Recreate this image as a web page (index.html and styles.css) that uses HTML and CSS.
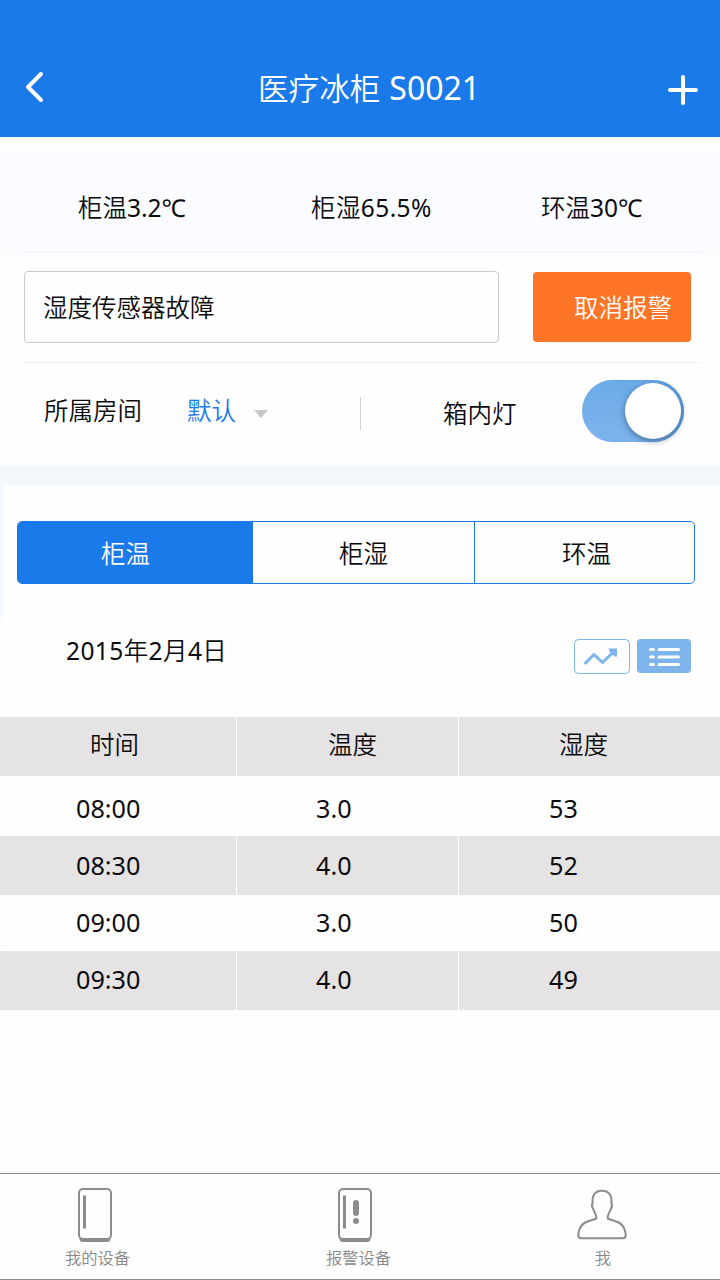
FILE: index.html
```html
<!DOCTYPE html>
<html lang="zh-CN">
<head>
<meta charset="utf-8">
<title>医疗冰柜 S0021</title>
<link rel="stylesheet" href="styles.css">
</head>
<body>
<div class="app">
  <header class="header">
    <svg class="back" width="22" height="34" viewBox="0 0 22 34"><path d="M17 4 4 17l13 13"/></svg>
    <h1 class="title">医疗冰柜 <span class="code num">S0021</span></h1>
    <svg class="add" width="32" height="32" viewBox="0 0 32 32"><path d="M16 3v26M3 16h26"/></svg>
  </header>

  <section class="stats">
    <span class="stat">柜温<span class="num">3.2℃</span></span>
    <span class="stat humidity">柜湿<span class="num">65.5%</span></span>
    <span class="stat">环温<span class="num">30℃</span></span>
  </section>

  <section class="alarm">
    <div class="alarm-text">湿度传感器故障</div>
    <button class="cancel">取消报警</button>
  </section>

  <section class="settings">
    <span class="room-label">所属房间</span>
    <span class="room">默认</span>
    <i class="caret"></i>
    <i class="divider"></i>
    <span class="lamp-label">箱内灯</span>
    <div class="switch"><i class="knob"></i></div>
  </section>

  <main class="records">
    <div class="panel">
      <nav class="tabs">
        <a class="tab active">柜温</a>
        <a class="tab">柜湿</a>
        <a class="tab">环温</a>
      </nav>
    </div>
    <div class="log">
      <div class="log-bar">
        <span class="date"><span class="num">2015</span>年<span class="num">2</span>月<span class="num">4</span>日</span>
        <svg class="view chart" width="56" height="35" viewBox="0 0 56 35">
          <rect class="frame" x=".5" y=".5" width="55" height="34" rx="4"/>
          <path class="trend" d="M11.500 24 20 15.500l8.500 8L40.500 12"/>
          <path class="tip" d="M34.500 9.500h8.500v8l-2.500 0-5-5z"/>
        </svg>
        <svg class="view list" width="54" height="34" viewBox="0 0 54 34">
          <rect class="fill" width="54" height="34" rx="4"/>
          <path class="lines" d="M13.500 10.500h3M22 10.500h19.500M13.500 18h3M22 18h19.500M13.500 25.500h3M22 25.500h19.500"/>
        </svg>
      </div>
      <div class="table">
        <div class="row head shaded"><span class="c1">时间</span><span class="c2">温度</span><span class="c3">湿度</span></div>
        <div class="row first"><span class="c1">08:00</span><span class="c2">3.0</span><span class="c3">53</span></div>
        <div class="row shaded second"><span class="c1">08:30</span><span class="c2">4.0</span><span class="c3">52</span></div>
        <div class="row third"><span class="c1">09:00</span><span class="c2">3.0</span><span class="c3">50</span></div>
        <div class="row shaded fourth"><span class="c1">09:30</span><span class="c2">4.0</span><span class="c3">49</span></div>
      </div>
    </div>
  </main>

  <footer class="tabbar">
    <a class="item mine">
      <svg width="36" height="56" viewBox="0 0 36 56"><rect x="2" y="2" width="32" height="50" rx="4"/><path d="M3.500 51.500c0 2 1 2.500 2.500 2.500h24c1.500 0 2.500-.5 2.500-2.500"/><path class="handle" d="M7.500 8.500v33"/></svg>
      <span>我的设备</span>
    </a>
    <a class="item alerts">
      <svg width="36" height="56" viewBox="0 0 36 56"><rect x="2" y="2" width="32" height="50" rx="4"/><path d="M3.500 51.500c0 2 1 2.500 2.500 2.500h24c1.500 0 2.500-.5 2.500-2.500"/><path class="handle" d="M7.500 8.500v33"/><path class="bang" d="M19 16v10"/><circle class="dot" cx="19" cy="34" r="3"/></svg>
      <span>报警设备</span>
    </a>
    <a class="item me">
      <svg class="person" width="50" height="56" viewBox="0 0 50 56"><path d="M19.300 31.500C19.800 28 17.500 26 16.500 22.500 15 20.500 14.600 18 15.600 16 14.800 8 18.500 3.800 25 3.800S35.200 8 34.400 16c1 2 .6 4.500-.9 6.500-1 3.500-3.300 5.500-2.800 9 2 1 6 2 10 3.500 6 2.500 8 9 8 13 0 2.200-1 3.300-3 3.300H4.300c-2 0-3-1.100-3-3.300 0-4 2-10.500 8-13 4-1.500 8-2.500 10-3.500z"/></svg>
      <span>我</span>
    </a>
  </footer>
</div>
</body>
</html>
```
FILE: styles.css
```css
* { box-sizing: border-box; }
body {
  margin: 0;
  font: 350 24.5px/30px "Noto Sans", "Noto Sans CJK SC DemiLight", "Noto Sans CJK SC", sans-serif;
  color: #0c0c0f;
  background: #fefefe;
}
svg { fill: none; display: block; flex: none; }
.num { font-weight: 400; }
.app { width: 720px; height: 1280px; display: flex; flex-direction: column; white-space: nowrap; overflow: hidden; }

.header { height: 137px; flex: none; background: #1b7aea; color: #fff; display: flex; padding: 70px 21px 0 24px; }
.back, .add { stroke: #fff; stroke-width: 4; stroke-linecap: round; stroke-linejoin: round; }
.title { margin: -2px 0 0 212px; width: 409px; font-size: 30.6px; line-height: 40px; font-weight: 350; }
.code { font-size: 32px; margin-left: 1px; }
.add { margin-top: 4px; }

.stats { height: 104px; flex: none; margin-top: 12px; background: #fafcff; display: flex; padding-top: 44px; position: relative; }
.stats::after { content: ""; position: absolute; left: 24px; right: 20px; bottom: 0; height: 1px; background: #edf0f4; }
.stat:nth-child(1) { margin-left: 78px; width: 233px; }
.stat:nth-child(2) { width: 230px; }
.humidity { letter-spacing: .4px; }

.alarm { flex: none; height: 110px; margin: 0 20px 0 24px; padding: 18px 9px 0 0; display: flex; justify-content: space-between; border-bottom: 1px solid #f0f1f3; }
.alarm-text { width: 475px; height: 72px; border: 1px solid #c9c9c9; border-radius: 4px; padding: 21px 0 0 18px; }
.cancel { margin-top: 1px; width: 158px; height: 70px; border: 0; border-radius: 4px; background: #ff7528; color: #fff; font: inherit; text-align: left; padding: 1px 0 0 41px; }

.settings { flex: none; height: 102px; display: flex; align-items: flex-start; }
.room-label { margin: 33px 0 0 44px; width: 143px; }
.room { margin-top: 33px; width: 67px; color: #1b7aea; }
.caret { margin-top: 47px; border: 7px solid transparent; border-top: 8px solid #c6c6c6; border-bottom: 0; }
.divider { width: 1px; height: 33px; margin: 34px 0 0 92px; background: #d2d2d2; }
.lamp-label { margin: 36px 0 0 82px; width: 139px; }
.switch { margin-top: 17px; width: 102px; height: 62px; border-radius: 31px; background: linear-gradient(#6caae8, #7db4ee); display: flex; padding: 3px; justify-content: flex-end; box-shadow: inset -2px 0 2px #5799d8; }
.knob { width: 56px; height: 56px; border-radius: 50%; background: #fff; box-shadow: 0 2px 6px rgba(20, 50, 90, .55); }

.records { flex: none; border-top: 20px solid #f3f8fc; }
.panel { height: 133px; border-left: 4px solid #f6f9fd; padding: 36px 25px 0 13px; }
.tabs { width: 678px; height: 63px; border: 1px solid #1b7aea; border-radius: 5px; display: flex; overflow: hidden; }
.tab { padding-top: 17px; }
.tab:nth-child(1) { width: 235px; padding-left: 83px; }
.tab:nth-child(2) { width: 221px; padding-left: 86px; }
.tab:nth-child(3) { width: 220px; padding-left: 87px; border-left: 1px solid #1b7aea; }
.tab.active { background: #1b7aea; color: #fff; }

.log { height: 458px; border-left: 1px solid #fafbfd; }
.log-bar { height: 99px; display: flex; padding: 18px 29px 0 65px; }
.date { width: 508px; letter-spacing: .4px; flex: none; }
.view { margin-top: 3px; }
.chart { margin-right: 7px; }
.frame, .trend { stroke: #7db4ec; }
.trend { stroke-width: 3; stroke-linecap: round; stroke-linejoin: round; }
.tip, .fill { fill: #7db4ec; }
.lines { stroke: #fff; stroke-width: 3; stroke-linecap: round; }

.table { margin-left: -1px; font-size: 25.2px; font-weight: 400; }
.row { display: flex; height: 59px; }
.row.head { font-size: 24.5px; font-weight: 350; }
.row .c1 { width: 237px; padding-left: 76px; border-right: 1px solid transparent; }
.row .c2 { width: 222px; padding-left: 79px; border-right: 1px solid transparent; }
.row .c3 { padding-left: 90px; }
.shaded { background: #e5e3e4; }
.shaded .c1, .shaded .c2 { border-color: #fff; }
.row.head .c1 { padding-left: 90px; }
.row.head .c2 { padding-left: 91px; }
.row.head .c3 { padding-left: 100px; }
.row.head span { padding-top: 13px; }
.first { height: 60px; }
.row.first span { padding-top: 17px; }
.row.second span { padding-top: 14px; }
.third { height: 56px; }
.row.third span { padding-top: 12px; }
.row.fourth span { padding-top: 13px; }

.tabbar { margin-top: auto; height: 109px; flex: none; border-top: 2px solid #f5fafa; border-bottom: 1px solid #8b8b8b; display: flex; padding-top: 14px; color: #888; font-size: 16.3px; line-height: 22px; font-weight: 300; box-shadow: inset 0 1px #8b8b8b; }
.item { display: flex; flex-direction: column; align-items: center; gap: 4px; }
.item svg { stroke: #8c8c8c; stroke-width: 2; }
.item .handle { stroke-width: 3; }
.item .bang { stroke-width: 6; stroke-linecap: round; }
.item .dot { fill: #8c8c8c; stroke: none; }
.mine { margin-left: 65px; width: 65px; }
.mine svg, .alerts svg { margin-left: -5px; }
.alerts { margin-left: 195px; width: 65px; }
.alerts span { margin-left: 2px; }
.me { margin-left: 187px; width: 50px; }
.me span { margin-left: 2px; }
```
